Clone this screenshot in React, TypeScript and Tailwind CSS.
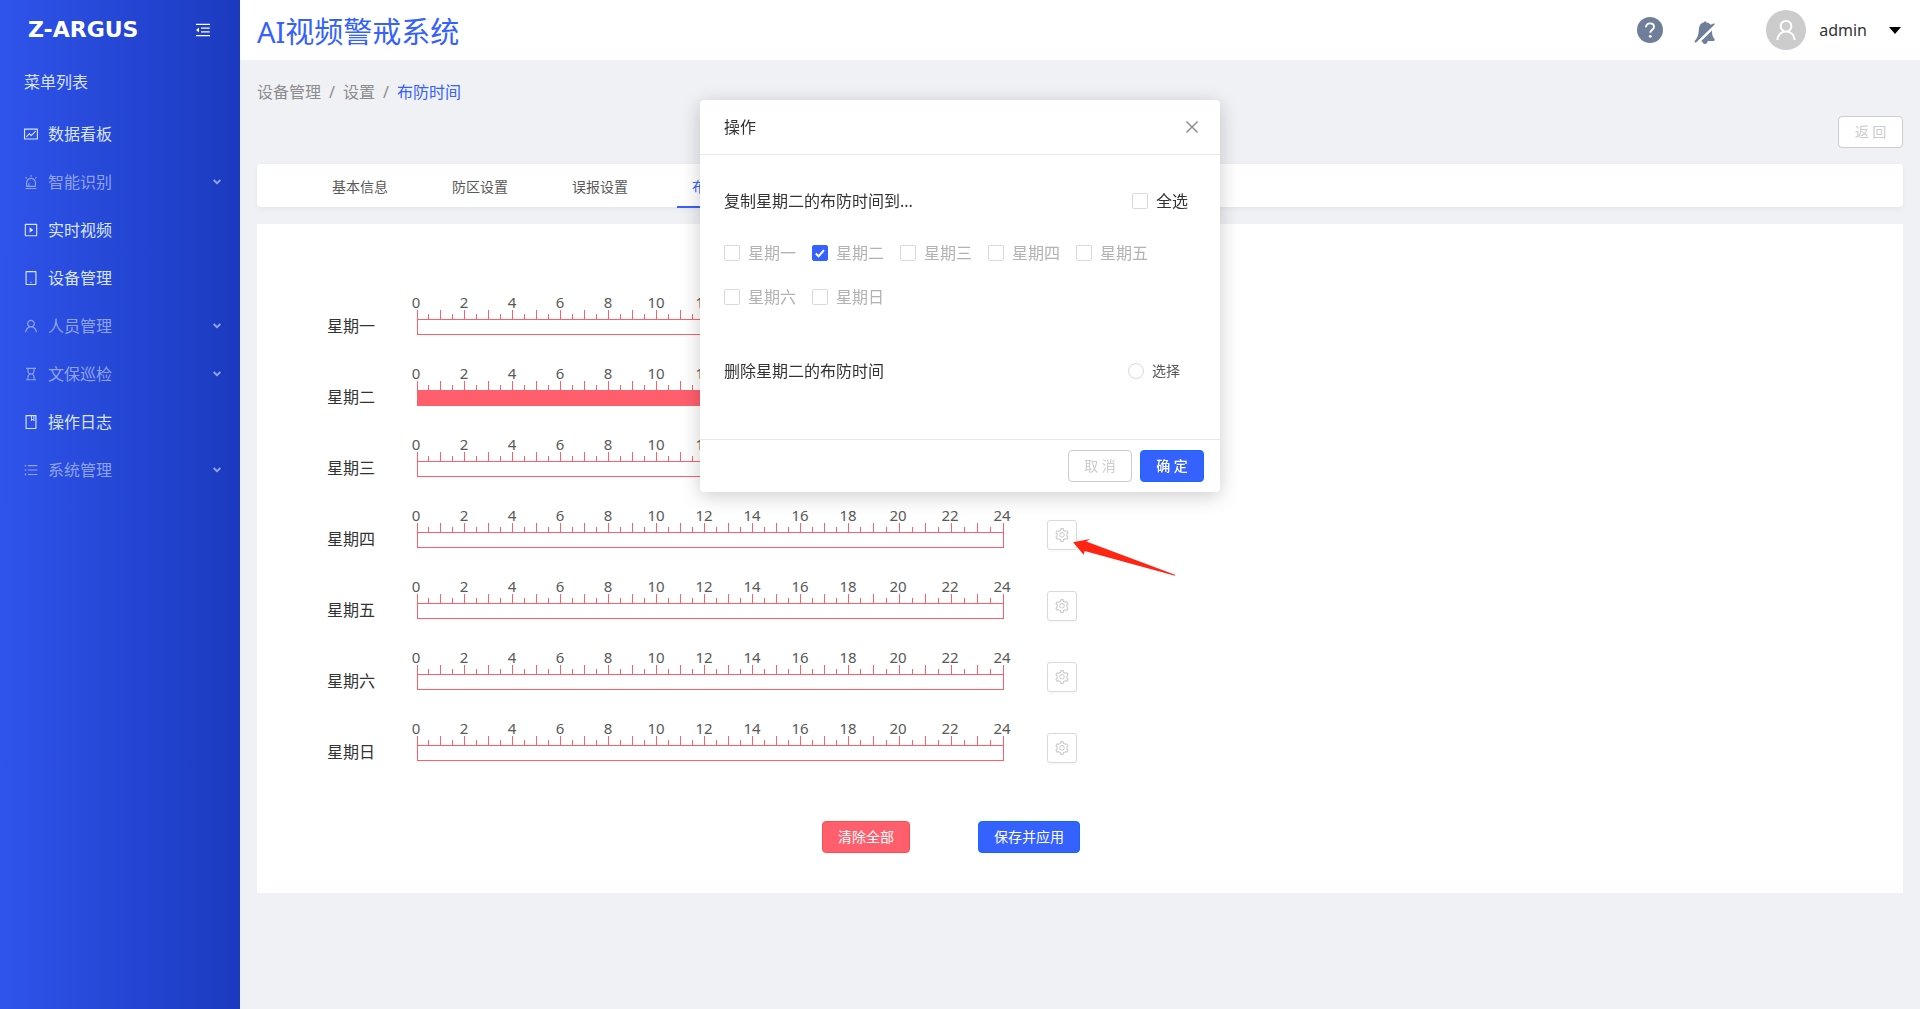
import type { ComponentType } from 'react';
import {
  AiOutlineAlert,
  AiOutlineBook,
  AiOutlineClose,
  AiOutlineFund,
  AiOutlineHourglass,
  AiOutlineMenuFold,
  AiOutlinePlaySquare,
  AiOutlineSetting,
  AiOutlineTablet,
  AiOutlineUnorderedList,
  AiOutlineUser,
} from 'react-icons/ai';

type MenuEntry = { label: string; Icon: ComponentType<{ className?: string }>; group?: boolean };

const MENU: MenuEntry[] = [
  { label: '数据看板', Icon: AiOutlineFund },
  { label: '智能识别', Icon: AiOutlineAlert, group: true },
  { label: '实时视频', Icon: AiOutlinePlaySquare },
  { label: '设备管理', Icon: AiOutlineTablet },
  { label: '人员管理', Icon: AiOutlineUser, group: true },
  { label: '文保巡检', Icon: AiOutlineHourglass, group: true },
  { label: '操作日志', Icon: AiOutlineBook },
  { label: '系统管理', Icon: AiOutlineUnorderedList, group: true },
];

const TABS = ['基本信息', '防区设置', '误报设置', '布防时间'];
const DAYS = ['星期一', '星期二', '星期三', '星期四', '星期五', '星期六', '星期日'];
const HOURS = [0, 2, 4, 6, 8, 10, 12, 14, 16, 18, 20, 22, 24];
const ARMED_DAY = '星期二';

// Horizontal place of every half-hour mark on the 24 h ruler.
const MARKS = Array.from({ length: 49 }, (_, i) => {
  if (i === 0) return 0;
  return i <= 37 ? 11 + (i - 1) * 12 : 443 + (i - 37) * 13;
});

function Chevron() {
  return (
    <svg viewBox="0 0 8 6" className="h-[6px] w-2" fill="none" stroke="currentColor" strokeWidth="2">
      <path d="M0.600 1L4 4.200 7.400 1" />
    </svg>
  );
}

function Sidebar() {
  return (
    <aside className="flex w-60 shrink-0 flex-col bg-linear-to-r from-[#2f54eb] to-[#1b3abf] text-[#d9e2ff]">
      <div className="flex h-[60px] items-center justify-between px-7">
        <span className="font-['DejaVu_Sans'] text-[22px] leading-6 font-bold text-white">Z-ARGUS</span>
        <button type="button" aria-label="收起菜单" className="text-white">
          <AiOutlineMenuFold className="size-[18px]" />
        </button>
      </div>
      <h2 className="pl-6 text-base leading-11">菜单列表</h2>
      <nav className="mt-[6px]">
        {MENU.map(({ label, Icon, group }) => (
          <a
            key={label}
            href="#"
            className={
              group
                ? 'flex h-12 items-center gap-[9px] pr-[19px] pl-[23px] text-[#8fa3ee]'
                : 'flex h-12 items-center gap-[9px] pr-[19px] pl-[23px] text-[#d9e5ff]'
            }
          >
            <Icon className="size-4" />
            <span className="flex-1 text-base">{label}</span>
            {group && <Chevron />}
          </a>
        ))}
      </nav>
    </aside>
  );
}

function Header() {
  return (
    <header className="flex h-[60px] items-center justify-between bg-white pr-[19px] pl-[17px]">
      <h1 className="pt-1 text-[29px] leading-9 text-[#3561ff]">AI视频警戒系统</h1>
      <div className="flex items-center">
        <button type="button" aria-label="帮助">
          <svg viewBox="0 0 26 26" className="size-[26px]">
            <circle cx="13" cy="13" r="13" fill="#6f7f99" />
            <path
              d="M9 10.200c0-2.400 1.800-3.800 4-3.800s4 1.400 4 3.500c0 2.600-3.700 3-3.700 5.800"
              fill="none"
              stroke="#fff"
              strokeWidth="1.900"
            />
            <circle cx="13.300" cy="19.300" r="1.400" fill="#fff" />
          </svg>
        </button>
        <button type="button" aria-label="消息提醒" className="mt-1 ml-[31px]">
          <svg viewBox="0 0 21 25" className="h-[25px] w-[21px]" fill="#6f7f99">
            <path d="M11 1l1.500 1.500c1.800.3 3.200 1 4.300 2.200L19.600 3.400c.9-.2 1.400.700.8 1.400L2.400 22.300c-1.200.900-2.400-.300-1.600-1.400C3.500 18 4.600 14.500 4.800 10.500 5 6.500 6 3 9.700 2.400z" />
            <path d="M18 10.500c0 4 .400 6 2.500 8.500.500.900.200 2-.900 2h-6c.100 3.600-5 3.900-5.300.600L7 21.300z" />
          </svg>
        </button>
        <span className="ml-[51px] flex size-10 items-center justify-center rounded-full bg-[#cccccc] text-white">
          <AiOutlineUser className="size-[26px]" />
        </span>
        <button type="button" className="ml-[13px] flex items-center gap-[22px] text-base text-[#333]">
          admin
          <svg viewBox="0 0 12 7" className="h-[7px] w-3">
            <path d="M0 0h12L6 7z" fill="#000" />
          </svg>
        </button>
      </div>
    </header>
  );
}

function Ruler({ filled }: { filled: boolean }) {
  return (
    <div className="shrink-0 pt-[10px]">
      <div className="flex text-[15px] leading-4 text-[#595959]">
        {HOURS.map((hour) => (
          <span key={hour} className={hour < 20 ? 'w-12 text-center' : 'w-[52px] text-center'}>
            {hour}
          </span>
        ))}
      </div>
      <svg viewBox="0 0 587 25" className="ml-[25px] h-[25px] w-[587px]">
        {MARKS.map((x, i) => (
          <rect key={x} x={x} y={i % 2 ? 4 : 0} width="1" height={i % 2 ? 5 : 9} fill="#ff5f6d" />
        ))}
        <rect x="0.5" y="9.5" width="586" height="15" fill={filled ? '#ff5f6d' : '#fff'} stroke="#ff5f6d" />
      </svg>
    </div>
  );
}

function Schedule() {
  return (
    <section className="mt-[17px] bg-white pt-[60px] pb-10">
      {DAYS.map((day) => (
        <div key={day} className="flex h-[71px] items-start pl-[70px]">
          <span className="mt-[30px] w-[65px] text-base leading-6 text-[#333]">{day}</span>
          <Ruler filled={day === ARMED_DAY} />
          <button
            type="button"
            aria-label={`${day}设置`}
            className="mt-[23px] ml-[19px] flex size-[30px] items-center justify-center rounded-[3px] border border-[#d9d9d9] bg-white text-[#cccccc] shadow-[0_2px_0_rgba(0,0,0,0.02)]"
          >
            <AiOutlineSetting className="size-4" />
          </button>
        </div>
      ))}
      <div className="mt-10 flex gap-[68px] pl-[565px] text-sm text-white">
        <button type="button" className="h-8 rounded border border-[#ff4d4f] bg-[#ff5f6d] px-[15px]">
          清除全部
        </button>
        <button type="button" className="h-8 rounded border border-[#1268ff] bg-[#3561ff] px-[15px]">
          保存并应用
        </button>
      </div>
    </section>
  );
}

const BOX =
  'peer size-4 appearance-none rounded-[2px] border border-[#d9d9d9] bg-white checked:border-[#3561ff] checked:bg-[#3561ff]';

function DayCheckbox({ day }: { day: string }) {
  return (
    <label className="relative flex items-center gap-2 text-base leading-5 text-[#b2b2b2]">
      <input type="checkbox" defaultChecked={day === ARMED_DAY} className={BOX} />
      <svg
        viewBox="0 0 16 16"
        className="pointer-events-none absolute left-0 hidden size-4 peer-checked:block"
        fill="none"
        stroke="#fff"
        strokeWidth="2"
      >
        <path d="M3.800 8.500l2.800 2.700 5.400-6" />
      </svg>
      {day}
    </label>
  );
}

function Dialog() {
  return (
    <div
      role="dialog"
      aria-label="操作"
      className="fixed top-[100px] left-1/2 w-[520px] -translate-x-1/2 rounded bg-white text-[#333] shadow-[0_4px_20px_rgba(0,0,0,0.2)]"
    >
      <div className="flex h-[55px] items-center justify-between border-b border-[#e8e8e8] pr-[19px] pl-6 text-base">
        操作
        <button type="button" aria-label="关闭" className="text-[#8c8c8c]">
          <AiOutlineClose className="size-[18px]" />
        </button>
      </div>
      <div className="px-6 pt-9 pb-[58px]">
        <div className="flex items-center justify-between pr-2 text-base leading-5">
          复制星期二的布防时间到...
          <label className="flex items-center gap-2">
            <input type="checkbox" className={BOX} />
            全选
          </label>
        </div>
        <div className="mt-8 flex flex-wrap gap-x-4 gap-y-6">
          {DAYS.map((day) => (
            <DayCheckbox key={day} day={day} />
          ))}
        </div>
        <div className="mt-[54px] flex items-center justify-between pr-4 text-base leading-5">
          删除星期二的布防时间
          <label className="flex items-center gap-2 text-sm text-[#595959]">
            <input type="radio" className="size-4 appearance-none rounded-full border border-[#d9d9d9]" />
            选择
          </label>
        </div>
      </div>
      <div className="flex justify-end gap-2 border-t border-[#e8e8e8] px-4 py-[10px] text-sm">
        <button type="button" className="h-8 w-16 rounded border border-[#cccccc] bg-white text-[#cccccc]">
          取 消
        </button>
        <button type="button" className="h-8 w-16 rounded border border-[#1268ff] bg-[#3561ff] font-medium text-white">
          确 定
        </button>
      </div>
    </div>
  );
}

export default function App() {
  return (
    <div className="flex min-h-screen bg-[#f0f1f5] font-['Noto_Sans','Noto_Sans_CJK_SC',sans-serif]">
      <Sidebar />
      <div className="min-w-0 flex-1">
        <Header />
        <main className="px-[17px]">
          <nav className="flex gap-2 pt-5 text-base leading-6 text-[#8c8c8c]">
            <a href="#">设备管理</a>
            <span>/</span>
            <a href="#">设置</a>
            <span>/</span>
            <a href="#" className="text-[#3561ff]">
              布防时间
            </a>
          </nav>
          <div className="mt-3 flex justify-end">
            <button
              type="button"
              className="h-8 w-[65px] rounded border border-[#cccccc] bg-white text-sm text-[#cccccc]"
            >
              返 回
            </button>
          </div>
          <div className="mt-4 flex h-[43px] gap-[34px] rounded bg-white pl-[60px] shadow-[0_2px_5px_rgba(0,0,0,0.05)]">
            {TABS.map((tab, i) => (
              <button
                key={tab}
                type="button"
                className={
                  i === 3
                    ? 'h-11 border-b-2 border-[#3561ff] px-[15px] pt-[3px] text-sm text-[#3561ff]'
                    : 'h-11 border-b-2 border-transparent px-[15px] pt-[3px] text-sm text-[#595959]'
                }
              >
                {tab}
              </button>
            ))}
          </div>
          <div className="relative">
            <Schedule />
            <svg viewBox="0 0 102 38" className="absolute top-[315px] left-[816px] h-[38px] w-[102px]" fill="#ff2512">
              <path d="M0 3.300L17 0l-3.700 2.400L102 35.700v1L11.700 12l-1 3.700z" />
            </svg>
          </div>
        </main>
      </div>
      <Dialog />
    </div>
  );
}
